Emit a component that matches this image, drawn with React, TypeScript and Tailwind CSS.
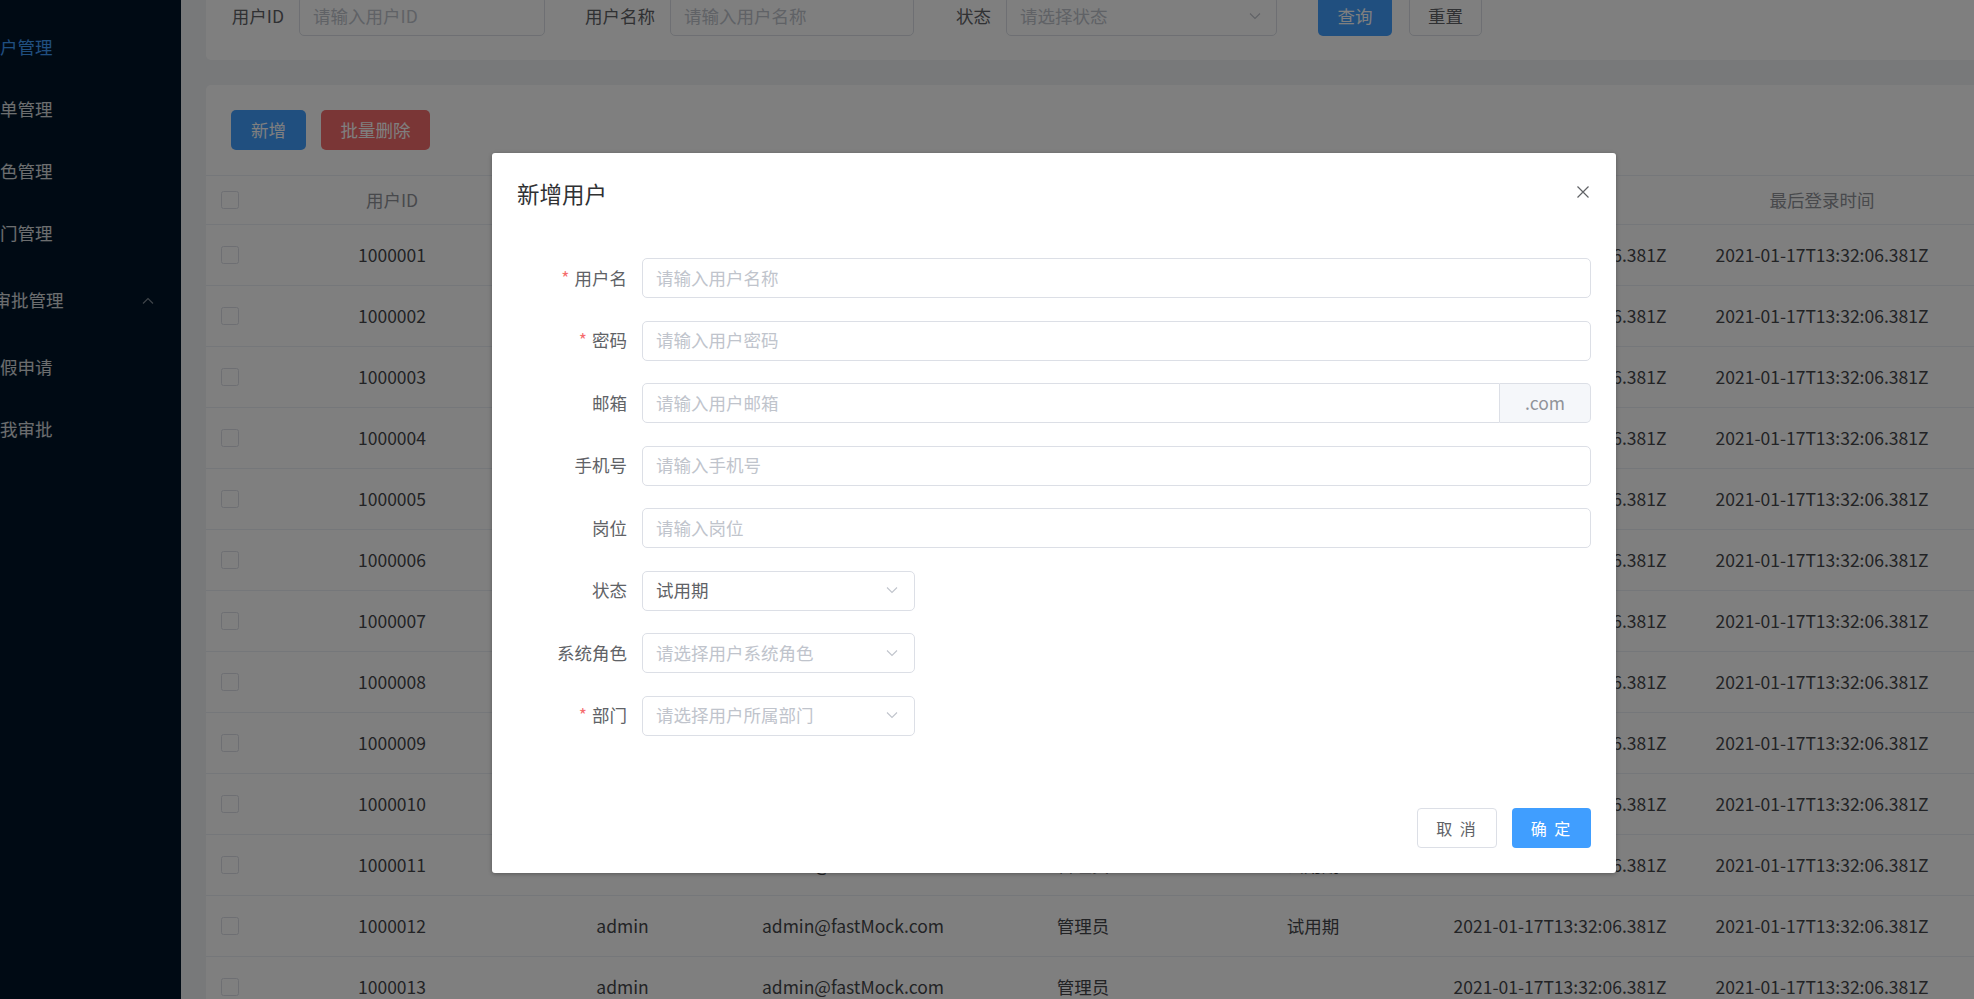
import React from "react";

const font = "font-['Noto_Sans_CJK_SC','Noto_Sans_CJK_JP',sans-serif]";

const Chevron = ({ up = false, className = "" }: { up?: boolean; className?: string }) => (
  <svg width="12" height="7" viewBox="0 0 12 7" className={className} fill="none">
    <polyline
      points={up ? "1,6.5 6,1.5 11,6.5" : "1,0.5 6,5.5 11,0.5"}
      stroke="currentColor"
      strokeWidth="1.1"
    />
  </svg>
);

const Checkbox = () => (
  <span className="block w-[18px] h-[18px] rounded-[2.5px] border border-[#dcdfe6] bg-white" />
);

const menu = [
  { label: "用户管理", active: true },
  { label: "菜单管理" },
  { label: "角色管理" },
  { label: "部门管理" },
];

const cols = [
  { title: "用户ID", w: "w-[230px]" },
  { title: "用户名", w: "w-[231px]" },
  { title: "邮箱", w: "w-[230px]" },
  { title: "角色", w: "w-[230px]" },
  { title: "状态", w: "w-[230px]" },
  { title: "创建时间", w: "w-[264px]" },
  { title: "最后登录时间", w: "w-[260px]" },
];

const time = "2021-01-17T13:32:06.381Z";
const rows = Array.from({ length: 13 }, (_, i) => [
  String(1000001 + i),
  "admin",
  "admin@fastMock.com",
  "管理员",
  i === 12 ? "" : "试用期",
  time,
  time,
]);

const Sidebar = () => (
  <aside className="w-[181px] shrink-0 bg-[#001529] overflow-hidden pt-[16px] text-[17.5px]">
    {menu.map((m) => (
      <div
        key={m.label}
        className={`h-[62px] flex items-center whitespace-nowrap ${m.active ? "text-[#409eff]" : "text-white/85"}`}
      >
        <span className="-ml-[17.5px] leading-none">{m.label}</span>
      </div>
    ))}
    <div className="h-[72px] flex items-center justify-between pr-[27px] text-white/85 whitespace-nowrap">
      <span className="-ml-[6.5px] leading-none">审批管理</span>
      <Chevron up className="text-white/50" />
    </div>
    {["休假申请", "待我审批"].map((s) => (
      <div key={s} className="h-[62px] flex items-center text-white/85 whitespace-nowrap">
        <span className="-ml-[17.5px] leading-none">{s}</span>
      </div>
    ))}
  </aside>
);

const SearchCard = () => (
  <div className="-mt-[25px] bg-white rounded-l-[5px] pt-[21px] pb-[24px] pl-[25px] flex items-center text-[17.5px] whitespace-nowrap">
    <span className="w-[68px] pr-[15px] text-right text-[#606266]">用户ID</span>
    <div className="w-[246px] h-[40px] border border-[#dcdfe6] rounded-[5px] flex items-center pl-[13px] text-[#c0c4cc]">
      请输入用户ID
    </div>
    <span className="ml-[40px] w-[85px] pr-[15px] text-right text-[#606266]">用户名称</span>
    <div className="w-[244px] h-[40px] border border-[#dcdfe6] rounded-[5px] flex items-center pl-[13px] text-[#c0c4cc]">
      请输入用户名称
    </div>
    <span className="ml-[41px] w-[51px] pr-[15px] text-right text-[#606266]">状态</span>
    <div className="w-[271px] h-[40px] border border-[#dcdfe6] rounded-[5px] flex items-center justify-between pl-[13px] pr-[15px] text-[#c0c4cc]">
      请选择状态
      <Chevron className="text-[#c0c4cc]" />
    </div>
    <button className="ml-[41px] w-[74px] h-[40px] rounded-[5px] bg-[#409eff] text-white">查询</button>
    <button className="ml-[17px] w-[73px] h-[40px] rounded-[5px] border border-[#dcdfe6] bg-white text-[#606266]">
      重置
    </button>
  </div>
);

const TableCard = () => (
  <div className="bg-white rounded-l-[5px] text-[17.5px] whitespace-nowrap">
    <div className="pt-[25px] pb-[25px] pl-[25px] flex gap-[15px]">
      <button className="w-[75px] h-[40px] rounded-[5px] bg-[#409eff] text-white">新增</button>
      <button className="w-[109px] h-[40px] rounded-[5px] bg-[#f56c6c] text-white">批量删除</button>
    </div>
    <div className="flex items-center h-[50px] border-y border-[#ebeef5] text-[#909399]">
      <div className="w-[71px] pl-[15px]">
        <Checkbox />
      </div>
      {cols.map((c) => (
        <div key={c.title} className={`${c.w} text-center`}>
          {c.title}
        </div>
      ))}
    </div>
    {rows.map((r) => (
      <div key={r[0]} className="flex items-center h-[61px] border-b border-[#ebeef5] text-[#45474b]">
        <div className="w-[71px] pl-[15px]">
          <Checkbox />
        </div>
        {r.map((v, j) => (
          <div key={j} className={`${cols[j].w} text-center`}>
            {v}
          </div>
        ))}
      </div>
    ))}
  </div>
);

const Label = ({ text, required = false }: { text: string; required?: boolean }) => (
  <div className="w-[125px] shrink-0 pr-[15px] text-right text-[#606266]">
    {required && <span className="text-[#f56c6c] mr-[5px]">*</span>}
    {text}
  </div>
);

const TextInput = ({ placeholder }: { placeholder: string }) => (
  <div className="flex-1 h-[40px] border border-[#dcdfe6] rounded-[5px] flex items-center pl-[13px] text-[#c0c4cc]">
    {placeholder}
  </div>
);

const Select = ({ value, placeholder }: { value?: string; placeholder?: string }) => (
  <div className="w-[273px] h-[40px] border border-[#dcdfe6] rounded-[5px] flex items-center justify-between pl-[13px] pr-[16px]">
    <span className={value ? "text-[#606266]" : "text-[#c0c4cc]"}>{value ?? placeholder}</span>
    <Chevron className="text-[#c0c4cc]" />
  </div>
);

const FormRow = ({ children }: { children: React.ReactNode }) => (
  <div className="flex items-center h-[40px] mb-[22.5px]">{children}</div>
);

const Dialog = () => (
  <div className="absolute left-[492px] top-[153px] w-[1124px] bg-white rounded-[3px] shadow-[0_1px_4px_rgba(0,0,0,0.3)] text-[17.5px] whitespace-nowrap">
    <div className="pt-[25px] pb-[12.5px] px-[25px]">
      <h2 className="text-[22.5px] leading-[30px] text-[#303133]">新增用户</h2>
    </div>
    <button className="absolute top-[33px] right-[27px] text-[#606266]">
      <svg width="12" height="12" viewBox="0 0 12 12" fill="none">
        <path d="M0.5 0.5L11.5 11.5M11.5 0.5L0.5 11.5" stroke="currentColor" strokeWidth="1.2" />
      </svg>
    </button>
    <div className="pt-[37.5px] pb-[37.5px] pl-[25px] pr-[25px]">
      <FormRow>
        <Label text="用户名" required />
        <TextInput placeholder="请输入用户名称" />
      </FormRow>
      <FormRow>
        <Label text="密码" required />
        <TextInput placeholder="请输入用户密码" />
      </FormRow>
      <FormRow>
        <Label text="邮箱" />
        <div className="flex-1 flex h-[40px]">
          <div className="flex-1 border border-[#dcdfe6] rounded-l-[5px] flex items-center pl-[13px] text-[#c0c4cc]">
            请输入用户邮箱
          </div>
          <div className="w-[91px] border border-l-0 border-[#dcdfe6] rounded-r-[5px] bg-[#f5f7fa] flex items-center justify-center text-[#909399]">
            .com
          </div>
        </div>
      </FormRow>
      <FormRow>
        <Label text="手机号" />
        <TextInput placeholder="请输入手机号" />
      </FormRow>
      <FormRow>
        <Label text="岗位" />
        <TextInput placeholder="请输入岗位" />
      </FormRow>
      <FormRow>
        <Label text="状态" />
        <Select value="试用期" />
      </FormRow>
      <FormRow>
        <Label text="系统角色" />
        <Select placeholder="请选择用户系统角色" />
      </FormRow>
      <FormRow>
        <Label text="部门" required />
        <Select placeholder="请选择用户所属部门" />
      </FormRow>
    </div>
    <div className="pt-[12.5px] pb-[25px] px-[25px] flex justify-end gap-[15px]">
      <button className="w-[80px] h-[40px] rounded-[4px] border border-[#dcdfe6] text-[#606266] text-[16px] tracking-[2px]">
        取 消
      </button>
      <button className="w-[79px] h-[40px] rounded-[4px] bg-[#409eff] text-white text-[16px] tracking-[2px]">
        确 定
      </button>
    </div>
  </div>
);

export default function App() {
  return (
    <div className={`relative flex w-[1974px] h-[999px] overflow-hidden bg-[#f0f2f5] ${font}`}>
      <Sidebar />
      <main className="flex-1 min-w-0 pl-[25px] flex flex-col gap-[25px]">
        <SearchCard />
        <TableCard />
      </main>
      <div className="absolute inset-0 bg-black/50" />
      <Dialog />
    </div>
  );
}
